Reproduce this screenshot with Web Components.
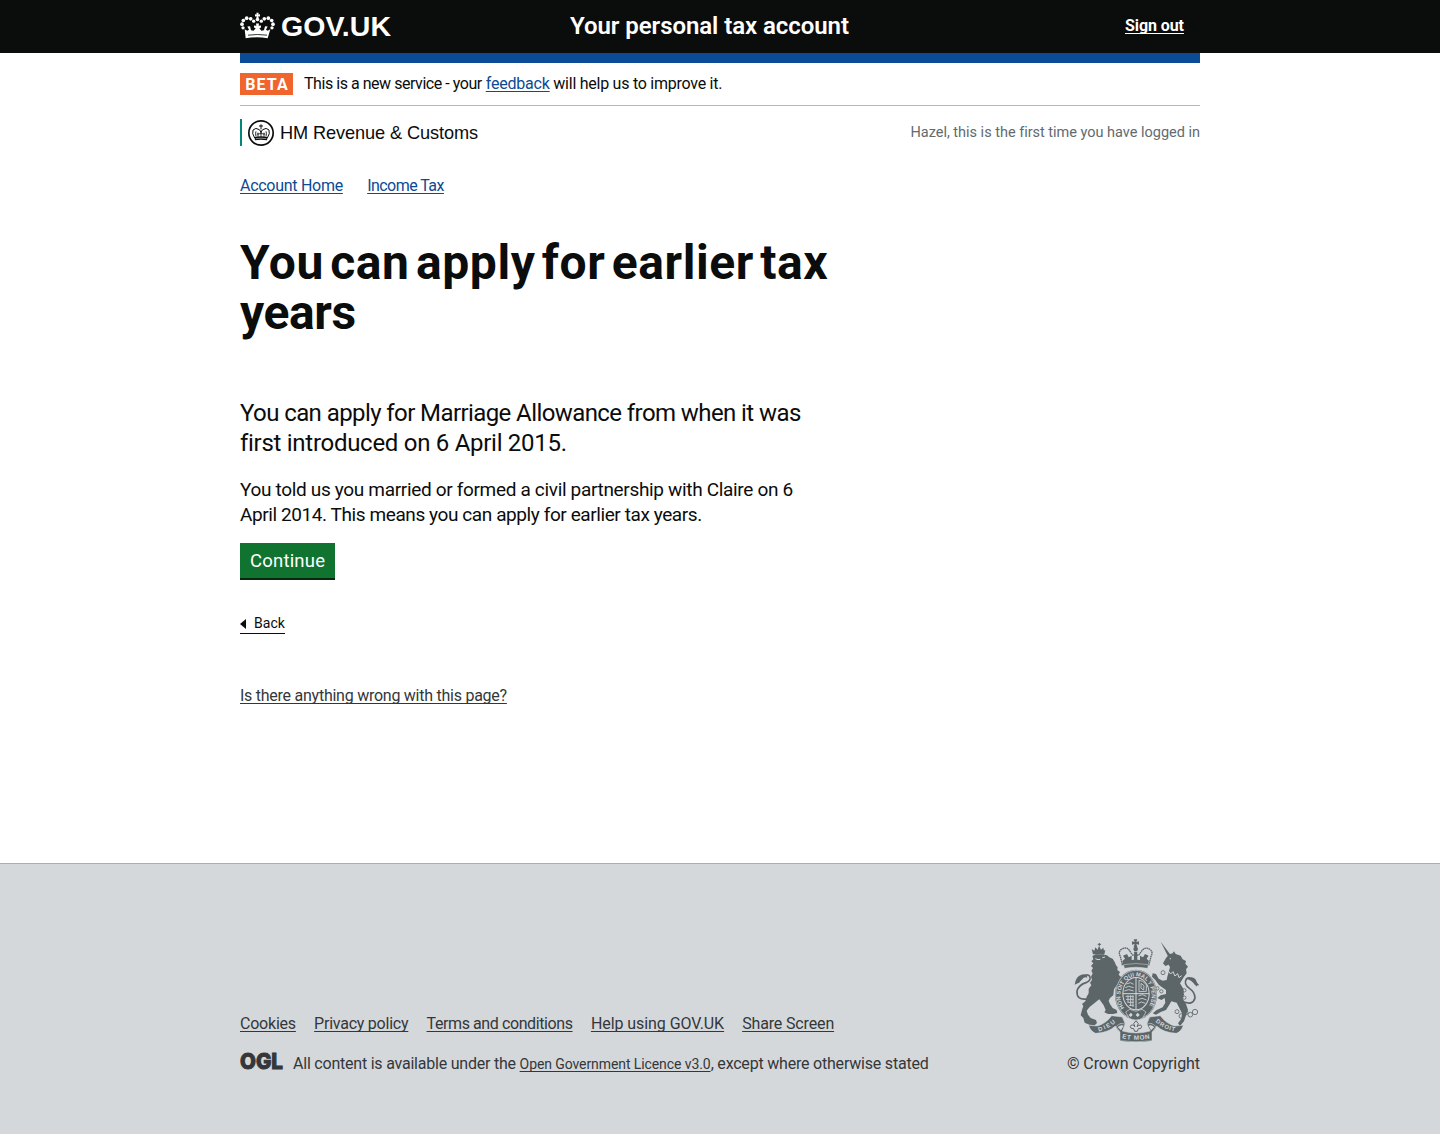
<!DOCTYPE html>
<html lang="en">
<head>
<meta charset="utf-8">
<title>You can apply for earlier tax years</title>
<style>
body{margin:0;background:#fff;color:#0b0c0c;font-family:Roboto,"Liberation Sans",sans-serif}
</style>
</head>
<body>
<tax-page></tax-page>
<script>
const define=(name,html,ready)=>{
  const t=document.createElement('template');t.innerHTML=html;
  customElements.define(name,class extends HTMLElement{
    constructor(){super();this.attachShadow({mode:'open'}).append(t.content.cloneNode(true));}
    connectedCallback(){if(ready)ready(this);}
  });
};

/* One line of text, tracked so that it fills the width given in "w". */
define('fit-line',`<style>:host{display:block;white-space:nowrap}span{display:inline-block;text-decoration:var(--line,none);text-decoration-thickness:1px;text-underline-offset:2px;text-decoration-skip-ink:none}</style><span><slot></slot></span>`,el=>{
  const s=el.shadowRoot.querySelector('span');
  const fit=()=>{
    const n=el.textContent.length,w=+el.getAttribute('w');
    s.style.letterSpacing='0';
    const sp=(w-s.getBoundingClientRect().width)/(n-0.5);
    s.style.letterSpacing=sp.toFixed(4)+'px';
    s.style.marginRight=(-sp).toFixed(4)+'px';
  };
  requestAnimationFrame(fit);document.fonts.ready.then(fit);
});

define('text-link',`<style>:host{display:block;--line:underline}a{color:inherit;text-decoration:none}</style><a href="#"><slot></slot></a>`,el=>{
  el.shadowRoot.querySelector('a').addEventListener('click',e=>e.preventDefault());
});

define('crown-mark',`<style>:host{display:block}svg{display:block;width:100%;height:100%}</style>
<svg viewBox="0 0 105 80" fill="currentColor">
<path d="M49 2h7l-1 5 5-1v7l-5-1 1 6h-7l1-6-5 1V6l5 1z"/><circle cx="52.500" cy="22" r="5.500"/>
<circle cx="41" cy="27" r="5"/><circle cx="64" cy="27" r="5"/>
<circle cx="32" cy="20" r="5.500"/><circle cx="73" cy="20" r="5.500"/>
<circle cx="20" cy="18" r="5.500"/><circle cx="85" cy="18" r="5.500"/>
<circle cx="10" cy="25" r="5.500"/><circle cx="95" cy="25" r="5.500"/>
<circle cx="6" cy="36" r="5.500"/><circle cx="99" cy="36" r="5.500"/>
<circle cx="9" cy="47" r="5"/><circle cx="96" cy="47" r="5"/>
<path d="M14 51l8 5 5-3-5-10 8-1 3 12 8 2 6-8-5-2v-6l7 1-1-7h9l-1 7 7-1v6l-5 2 6 8 8-2 3-12 8 1-5 10 5 3 8-5-8 27q-33-5-66 0z"/><path d="M24 69q28-4 57 0" fill="none" stroke="#0b0c0c" stroke-width="2.500"/></svg>`);

define('ring-crown',`<style>:host{display:block;width:26px;height:26px}svg{display:block}</style>
<svg width="26" height="26" viewBox="0 0 78 78" fill="none" stroke="#0b0c0c" stroke-width="3">
<circle cx="39" cy="39" r="36.500" stroke-width="5"/>
<path d="M20 54q-9-14-5-24 8-9 19-1 4 4 5 9 1-5 5-9 11-8 19 1 4 10-5 24M39 13v15M33 18h12"/>
<path d="M24 49q-3-9 0-15M30 50V38M26 42h8M39 50V32M34 41h10M48 50V38M44 42h8M54 49q3-9 0-15" stroke-width="2.500"/>
<path d="M19 51q20-4 40 0l-2 10q-18-3-36 0z" fill="#0b0c0c" stroke="none"/><path d="M23 56q16-3 32 0" stroke="#fff" stroke-width="1.500"/></svg>`);

define('site-header',`<style>
:host{display:block;background:#0b0c0c;color:#fff;height:53px}
.in{width:960px;height:53px;margin:auto;display:flex;align-items:center;font-weight:700}
crown-mark{width:35px;height:27px;margin-bottom:2px}
.logo{font:700 28.500px/34px "Liberation Sans",sans-serif;margin:0 0 1px 6px;width:288px}
.name{font-size:24px;line-height:30px;flex:1;font-weight:600;margin:0 0 2px 1px}
.out{font-size:16px;line-height:20px;margin:0 16px 1px 0}
</style><div class="in"><crown-mark></crown-mark><fit-line class="logo" w="110">GOV.UK</fit-line><fit-line class="name" w="279">Your personal tax account</fit-line><text-link class="out"><fit-line w="59">Sign out</fit-line></text-link></div>`);

define('phase-banner',`<style>
:host{display:flex;align-items:center;height:42px;border-top:10px solid #0b4a94;border-bottom:1px solid #b5b8ba;font-size:16px;line-height:20px}
b{background:#f0642e;color:#fff;width:53px;height:22px;line-height:23px;display:flex;justify-content:center;margin-right:11px;font-size:16px}
text-link{color:#0b4a94;margin:0 3.500px}
</style><b><fit-line w="43">BETA</fit-line></b><fit-line w="178">This is a new service - your</fit-line><text-link><fit-line w="64">feedback</fit-line></text-link><fit-line w="169">will help us to improve it.</fit-line>`);

define('org-row',`<style>
:host{display:flex;align-items:center;justify-content:space-between;margin-top:13px;height:27px}
.org{display:flex;align-items:center;border-left:2px solid #008779;height:27px;padding-left:6px;font:18.200px/24px "Liberation Sans",sans-serif}
ring-crown{margin:0 6px 0 0}
.seen{font-size:14.500px;line-height:20px;color:#626a6e}
</style><div class="org"><ring-crown></ring-crown><fit-line w="198">HM Revenue &amp; Customs</fit-line></div><fit-line class="seen" w="289">Hazel, this is the first time you have logged in</fit-line>`);

define('crumb-links',`<style>:host{display:flex;gap:24px;margin-top:30px;font-size:16px;line-height:20px;color:#0b4a94}</style>
<text-link><fit-line w="103">Account Home</fit-line></text-link><text-link><fit-line w="77">Income Tax</fit-line></text-link>`);

define('go-button',`<style>button{display:block;border:0;border-bottom:2px solid #06280f;background:#10732f;color:#fff;width:95px;height:37px;padding:1px 10px 0;font:18.500px/34px Roboto,sans-serif}</style><button><fit-line w="75">Continue</fit-line></button>`);

define('back-link',`<style>:host{display:flex;align-items:center;width:45px;height:20px;border-bottom:1px solid #0b0c0c;font-size:14px;line-height:20px}
i{border:solid transparent;border-width:5px 6px 5px 0;border-right-color:#0b0c0c;margin:1px 8px 0 0}</style><i></i><fit-line w="31">Back</fit-line>`);

define('main-content',`<style>
:host{display:block}h1,p{margin:0;font-weight:400}
h1{margin-top:42px;font-size:48px;line-height:50px;font-weight:700;word-spacing:-6px}
.lead{margin-top:60px;font-size:24px;line-height:30px}
.body{margin-top:19px;font-size:19px;line-height:25px}
go-button{display:block;margin-top:16px}back-link{margin-top:33px}
.help{margin-top:52px;font-size:16px;line-height:20px;color:#33373a}
</style>
<h1><fit-line w="588">You can apply for earlier tax</fit-line><fit-line w="116">years</fit-line></h1>
<p class="lead"><fit-line w="561">You can apply for Marriage Allowance from when it was</fit-line><fit-line w="326">first introduced on 6 April 2015.</fit-line></p>
<p class="body"><fit-line w="553">You told us you married or formed a civil partnership with Claire on 6</fit-line><fit-line w="462">April 2014. This means you can apply for earlier tax years.</fit-line></p>
<go-button></go-button><back-link></back-link>
<text-link class="help"><fit-line w="267">Is there anything wrong with this page?</fit-line></text-link>`);

define('ogl-mark',`<style>:host{display:block;width:43px;height:18px}svg{display:block}</style>
<svg width="43" height="18" viewBox="0 0 43 18" overflow="visible"><text x="0" y="17" textLength="43" lengthAdjust="spacingAndGlyphs" font-family="Inter,'Liberation Sans',sans-serif" font-weight="800" font-size="21.500" fill="#33373a" stroke="#33373a" stroke-width="1">OGL</text></svg>`);

/* Royal coat of arms: lion and unicorn supporting the crowned shield. */
define('royal-arms',`<style>:host{display:block;width:126px;height:104px}svg{display:block}text{font-family:"Liberation Sans",sans-serif;font-weight:700}</style>
<svg width="126" height="104" viewBox="42 24 378 312" fill="#5c6669">
<defs><path id="ring" d="M193 234A47 57 0 1 1 263 234"/><path id="d1" d="M116 304Q145 298 169 275"/><path id="d2" d="M186 325Q228 334 272 325"/><path id="d3" d="M286 275Q312 299 348 305"/></defs>
<!-- lion -->
<path d="M99 73l-4-16 8 5 3-10 7 7 4-12 6 12 7-6 2 9 4-3-3 15z"/>
<path d="M99 67q17-5 33 0M113 43h10M118 39v9" fill="none" stroke="#5c6669" stroke-width="3"/>
<path d="M97 78L108 73 128 74 141 76 148 82 158 86 164 96 168 106 173 112 172 120 180 126 176 134 184 142 178 148 184 156 170 166 162 178 160 196 150 204 146 212 150 222 158 234 170 240 172 249 160 252 144 252 133 247 137 240 131 226 118 208 112 212 100 222 88 232 80 242 84 254 92 264 108 270 111 279 104 286 88 284 74 278 70 264 62 256 66 240 70 228 66 222 76 214 80 200 86 190 86 176 94 166 90 158 96 150 93 140 98 130 94 122 99 114 93 108 100 100 94 94 100 88Z"/>
<path d="M106 86l8 3 7-1M127 83l8-2" fill="none" stroke="#d5d8db" stroke-width="3"/>
<path d="M80 207Q49 211 51 183 57 164 78 158 95 151 89 139 83 130 70 139L54 158" fill="none" stroke="#5c6669" stroke-width="5"/><path d="M44 164q4-26 20-30 17-5 18 9-9-4-17 6-8 10-21 15z"/>
<!-- crown -->
<path d="M187 104l-6-25q-8-14 5-22 16-9 25 9l7 9h18l7-9q10-17 25-9 13 8 5 22l-6 25q-40-8-80 0z" fill="#d5d8db" stroke="#5c6669" stroke-width="4" stroke-dasharray="5 1.500"/>
<path d="M221 28h11l-3 8 8-2v10l-8-2 3 9h-11l3-9-8 2V34l8 2z"/>
<circle cx="227" cy="57" r="7"/><path d="M222 65h10l-2 23h-6z"/>
<path d="M187 93l8-7-6-9 12-5 5 10 9-5v13l7-1v-13h10v13l8 1V77l9 5 6-10 11 5-6 9 7 7-4 13q-37-8-74 0z"/>
<path d="M191 104q36-7 74 0l-2 11q-35-7-70 0z" stroke="#d5d8db" stroke-width="1.500"/>
<!-- unicorn -->
<path d="M302 35l30 40-7 6z"/>
<path d="M309 100L318 84 328 73 338 70 342 64 347 72 362 77 368 88 378 93 376 101 384 110 378 118 380 130 372 140 366 150 360 160 370 176 372 194 368 206 378 222 384 240 378 256 372 274 360 288 354 280 364 266 366 250 358 234 350 218 334 214 328 224 318 240 302 246 288 254 278 250 290 240 308 232 316 218 314 204 304 210 292 204 302 196 318 192 318 180 306 172 296 164 286 150 276 140 278 130 288 132 296 146 308 152 320 150 322 140 326 126 330 112 326 104 316 108Z"/>
<path d="M324 122l8 10 7-7 6 13 8-7 4 12 8-6" fill="none" stroke="#d5d8db" stroke-width="3"/><circle cx="331" cy="86" r="2" fill="#d5d8db"/>
<path d="M366 214q33 14 39-10 0-17-16-28-19-14-10-29 11-9 22 6l10 15" fill="none" stroke="#5c6669" stroke-width="5"/><path d="M382 148q12-12 24-1 5 13 12 19l-13-1q-9-13-23-17z"/>
<g fill="none" stroke="#5c6669" stroke-width="2.500"><circle cx="309" cy="128" r="6"/><circle cx="292" cy="175" r="5"/><circle cx="304" cy="184" r="5"/><circle cx="351" cy="245" r="6"/><circle cx="364" cy="258" r="7"/><circle cx="377" cy="248" r="7"/><circle cx="391" cy="254" r="7"/><circle cx="405" cy="246" r="8"/><circle cx="373" cy="181" r="5"/><circle cx="373" cy="203" r="5"/></g>
<!-- shield and garter -->
<ellipse cx="228" cy="194" rx="63" ry="75"/><ellipse cx="228" cy="194" rx="61" ry="73" fill="none" stroke="#d5d8db" stroke-width="2"/>
<ellipse cx="228" cy="191" rx="41" ry="50" fill="#d5d8db"/><ellipse cx="228" cy="191" rx="38" ry="47"/>
<path d="M228 143v96M189 191h78" stroke="#d5d8db" stroke-width="3"/>
<g fill="none" stroke="#d5d8db" stroke-width="2.500"><path d="M199 162l12-4 10 5M196 173l10-4 15 4M193 183l13-4 15 4M236 197l12-3 11 5M235 209l11-4 14 5M235 220l9-4 12 4M197 199h24M198 208h23M202 217h19M207 226h14M204 196v20M212 196v32M219 196v35"/><path d="M237 151v34l22-1v-20l-11-10zM243 160l9 7-1 13-8-5z"/></g>
<text font-size="17" fill="#d5d8db"><textPath href="#ring" textLength="236" lengthAdjust="spacingAndGlyphs">HON SOIT QUI MAL Y PENSE</textPath></text>
<path d="M197 246l12-8 19 6 18-6 12 8-11 19q-19 10-39 0z" stroke="#d5d8db" stroke-width="2"/><path d="M213 248l5 7-6 6-6-6zM233 248l6 7-6 6-6-6z" fill="#d5d8db"/>
<!-- ribbon -->
<g stroke="#d5d8db" stroke-width="1.500"><path d="M86 286L112 288Q138 281 155 257L187 261 196 283 181 281 171 289 176 306 166 288Q145 308 107 310 92 305 86 286z"/>
<path d="M370 286L344 288Q318 281 301 257L269 261 260 283 275 281 285 289 280 306 290 288Q311 308 349 310 364 305 370 286z"/>
<path d="M168 290q13-14 27-7l-8 20q41 12 84 0l-10-20q14-7 27 7l-12 17v25q-48 7-96 0v-26z"/></g>
<path d="M173 291q10-8 18-4l-8 14zM283 291q-9-8-17-4l7 14z" fill="#d5d8db"/>
<g fill="#d5d8db"><text font-size="18"><textPath href="#d1" textLength="58">DIEU</textPath></text><text font-size="19"><textPath href="#d2" textLength="84">ET MON</textPath></text><text font-size="18"><textPath href="#d3" textLength="66">DROIT</textPath></text></g>
<path d="M228 272l7 9-4 9q12-10 14 0-1 8-10 6l-3 8h-8l-3-8q-11 1-10-7 4-9 14 1l-4-9z" fill="#d5d8db" stroke="#5c6669" stroke-width="3"/>
</svg>`);

define('site-footer',`<style>
:host{display:block;box-sizing:border-box;height:271px;border-top:1px solid #a9adb0;background:#d5d8db;color:#33373a;font-size:16px;line-height:20px}
.in{width:960px;margin:auto;display:flex;justify-content:space-between;padding-top:74px}
.left{padding-top:76px}.links{display:flex;gap:18px}.ogl{display:flex;align-items:center;margin-top:19px}
ogl-mark{margin:-5px 10px 0 0}.ogl text-link{font-size:14px;margin:1px 0 0 3.500px}
.right{display:flex;flex-direction:column;align-items:flex-end}.copy{margin-top:12px}
</style><div class="in"><div class="left"><div class="links">
<text-link><fit-line w="56">Cookies</fit-line></text-link><text-link><fit-line w="94.300">Privacy policy</fit-line></text-link><text-link><fit-line w="146.200">Terms and conditions</fit-line></text-link><text-link><fit-line w="133.200">Help using GOV.UK</fit-line></text-link><text-link><fit-line w="92">Share Screen</fit-line></text-link></div>
<div class="ogl"><ogl-mark></ogl-mark><fit-line w="223">All content is available under the</fit-line><text-link><fit-line w="191">Open Government Licence v3.0</fit-line></text-link><fit-line w="218">, except where otherwise stated</fit-line></div></div>
<div class="right"><royal-arms></royal-arms><fit-line class="copy" w="133">© Crown Copyright</fit-line></div></div>`);

define('tax-page',`<style>:host{display:flex;flex-direction:column;height:1134px}main{width:960px;margin:0 auto;flex:1}</style>
<site-header></site-header><main><phase-banner></phase-banner><org-row></org-row><crumb-links></crumb-links><main-content></main-content></main><site-footer></site-footer>`);
</script>
</body>
</html>
